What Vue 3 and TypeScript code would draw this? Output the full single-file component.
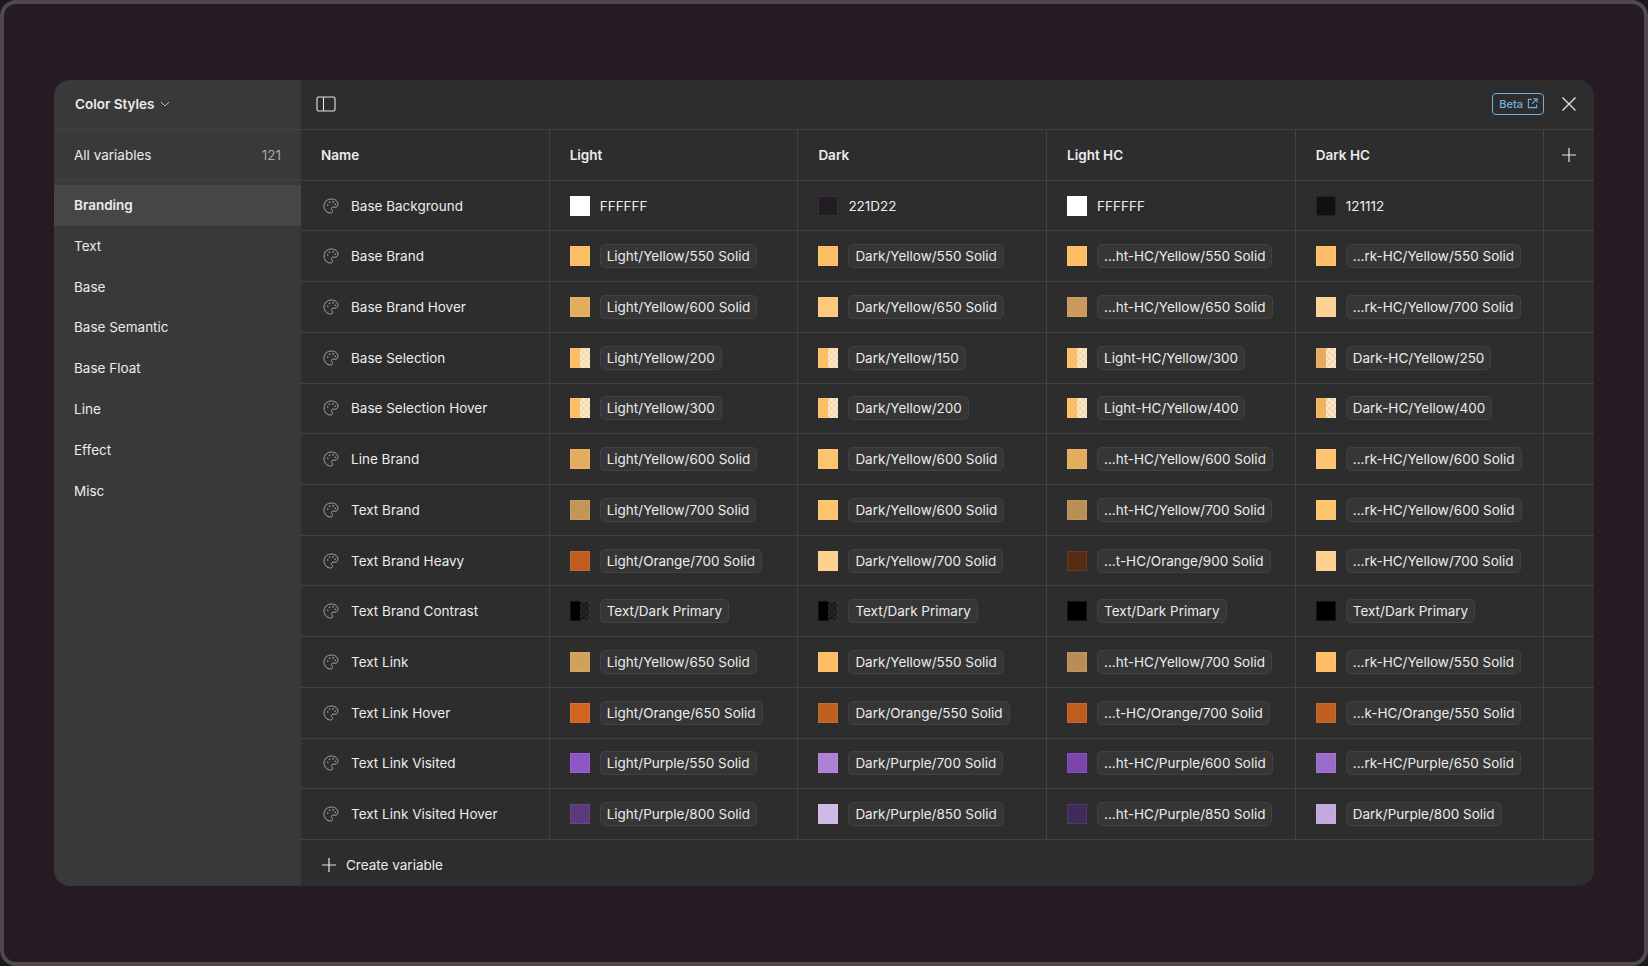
<script setup lang="ts">
interface Cell {
  color: string
  label: string
  raw?: boolean
  split?: '' | 'light' | 'dark'
}

interface Row {
  name: string
  cells: Cell[]
}

const c = (color: string, label: string, split: Cell['split'] = ''): Cell => ({ color, label, split })
const hex = (color: string, label: string): Cell => ({ color, label, raw: true })

const groups = ['Branding', 'Text', 'Base', 'Base Semantic', 'Base Float', 'Line', 'Effect', 'Misc']
const modes = ['Light', 'Dark', 'Light HC', 'Dark HC']

const rows: Row[] = [
  { name: 'Base Background', cells: [hex('#ffffff', 'FFFFFF'), hex('#221d22', '221D22'), hex('#ffffff', 'FFFFFF'), hex('#121112', '121112')] },
  { name: 'Base Brand', cells: [c('#fdbd66', 'Light/Yellow/550 Solid'), c('#fdbd66', 'Dark/Yellow/550 Solid'), c('#fdbd66', '...ht-HC/Yellow/550 Solid'), c('#fdbd66', '...rk-HC/Yellow/550 Solid')] },
  { name: 'Base Brand Hover', cells: [c('#e3ad5f', 'Light/Yellow/600 Solid'), c('#fdc97f', 'Dark/Yellow/650 Solid'), c('#c99a5b', '...ht-HC/Yellow/650 Solid'), c('#fdd192', '...rk-HC/Yellow/700 Solid')] },
  { name: 'Base Selection', cells: [c('#fdbd66', 'Light/Yellow/200', 'light'), c('#fdbd66', 'Dark/Yellow/150', 'light'), c('#fdbd66', 'Light-HC/Yellow/300', 'light'), c('#e8ab5e', 'Dark-HC/Yellow/250', 'light')] },
  { name: 'Base Selection Hover', cells: [c('#fdbd66', 'Light/Yellow/300', 'light'), c('#fdbd66', 'Dark/Yellow/200', 'light'), c('#fdbd66', 'Light-HC/Yellow/400', 'light'), c('#f0b361', 'Dark-HC/Yellow/400', 'light')] },
  { name: 'Line Brand', cells: [c('#e3ad5f', 'Light/Yellow/600 Solid'), c('#fdc46f', 'Dark/Yellow/600 Solid'), c('#e3ad5f', '...ht-HC/Yellow/600 Solid'), c('#fdc46f', '...rk-HC/Yellow/600 Solid')] },
  { name: 'Text Brand', cells: [c('#c49557', 'Light/Yellow/700 Solid'), c('#fdc46f', 'Dark/Yellow/600 Solid'), c('#ba8f55', '...ht-HC/Yellow/700 Solid'), c('#fdc46f', '...rk-HC/Yellow/600 Solid')] },
  { name: 'Text Brand Heavy', cells: [c('#bf5d1f', 'Light/Orange/700 Solid'), c('#fdd08f', 'Dark/Yellow/700 Solid'), c('#5a2d12', '...t-HC/Orange/900 Solid'), c('#fdd08f', '...rk-HC/Yellow/700 Solid')] },
  { name: 'Text Brand Contrast', cells: [c('#000000', 'Text/Dark Primary', 'dark'), c('#000000', 'Text/Dark Primary', 'dark'), c('#000000', 'Text/Dark Primary'), c('#000000', 'Text/Dark Primary')] },
  { name: 'Text Link', cells: [c('#d1a05d', 'Light/Yellow/650 Solid'), c('#fdbd66', 'Dark/Yellow/550 Solid'), c('#b98e55', '...ht-HC/Yellow/700 Solid'), c('#fdbd66', '...rk-HC/Yellow/550 Solid')] },
  { name: 'Text Link Hover', cells: [c('#d2651f', 'Light/Orange/650 Solid'), c('#bf6020', 'Dark/Orange/550 Solid'), c('#bf5d1f', '...t-HC/Orange/700 Solid'), c('#bf6020', '...k-HC/Orange/550 Solid')] },
  { name: 'Text Link Visited', cells: [c('#8f55c7', 'Light/Purple/550 Solid'), c('#ab82d4', 'Dark/Purple/700 Solid'), c('#7b45ad', '...ht-HC/Purple/600 Solid'), c('#9a6bcb', '...rk-HC/Purple/650 Solid')] },
  { name: 'Text Link Visited Hover', cells: [c('#5a3a7a', 'Light/Purple/800 Solid'), c('#d0b8e8', 'Dark/Purple/850 Solid'), c('#3f2a5c', '...ht-HC/Purple/850 Solid'), c('#c4a8e0', 'Dark/Purple/800 Solid')] },
]
</script>

<template>
  <div class="screen">
    <div class="panel">
      <aside class="side">
        <div class="collection">
          <span>Color Styles</span>
          <svg width="10" height="6" viewBox="0 0 10 6" fill="none" stroke="#b8b8b8"><path d="M1 1l4 4 4-4" /></svg>
        </div>
        <div class="all">
          <span>All variables</span>
          <span class="count">121</span>
        </div>
        <ul class="groups">
          <li v-for="(g, i) in groups" :key="g" :class="{ active: i === 0 }">{{ g }}</li>
        </ul>
      </aside>

      <main class="main">
        <div class="toolbar">
          <svg class="toggle" width="20" height="16" viewBox="0 0 20 16" fill="none" stroke="#e4e4e4" stroke-width="1.1">
            <rect x="1" y="1" width="18" height="14" rx="1.5" />
            <path d="M7.5 1v14" />
          </svg>
          <div class="tools">
            <span class="beta">
              Beta
              <svg width="11" height="11" viewBox="0 0 12 12" fill="none" stroke="#6fb1e0" stroke-width="1.2">
                <path d="M5 1.5H1.500v9h9V7" />
                <path d="M7 1h4v4M11 1L5.500 6.500" />
              </svg>
            </span>
            <svg width="14" height="14" viewBox="0 0 14 14" fill="none" stroke="#e8e8e8" stroke-width="1.2"><path d="M.5.5l13 13M13.500.5l-13 13" /></svg>
          </div>
        </div>

        <div class="row head">
          <div class="cell name-head">Name</div>
          <div v-for="m in modes" :key="m" class="cell">{{ m }}</div>
          <div class="cell add">
            <svg width="14" height="14" viewBox="0 0 14 14" fill="none" stroke="#e8e8e8" stroke-width="1.2"><path d="M7 0v14M0 7h14" /></svg>
          </div>
        </div>

        <div v-for="r in rows" :key="r.name" class="row">
          <div class="cell name">
            <svg class="palette" width="16" height="16" viewBox="0 0 16 16" fill="none" stroke="#a6a6a6" stroke-width="1">
              <path d="M8.200 1C4.200 1 1 4.100 1 8s3.100 7 6.600 7c1.300 0 1.900-.8 1.900-1.700 0-.6-.3-1-.6-1.400-.3-.4-.5-.8-.5-1.200 0-.9.7-1.500 1.600-1.500h1.800c1.900 0 3.200-1.200 3.200-3C15 3.200 11.900 1 8.200 1z" />
              <circle cx="4.700" cy="7" r=".8" fill="#a6a6a6" stroke="none" />
              <circle cx="6.500" cy="4.200" r=".8" fill="#a6a6a6" stroke="none" />
              <circle cx="10" cy="3.900" r=".8" fill="#a6a6a6" stroke="none" />
              <circle cx="12.300" cy="6.200" r=".8" fill="#a6a6a6" stroke="none" />
            </svg>
            <span>{{ r.name }}</span>
          </div>
          <div v-for="(v, i) in r.cells" :key="i" class="cell value">
            <span class="swatch" :class="v.split" :style="{ '--swatch': v.color }"></span>
            <span v-if="v.raw" class="raw">{{ v.label }}</span>
            <span v-else class="chip">{{ v.label }}</span>
          </div>
          <div class="cell add"></div>
        </div>

        <div class="create">
          <svg width="14" height="14" viewBox="0 0 14 14" fill="none" stroke="#e8e8e8" stroke-width="1.2"><path d="M7 0v14M0 7h14" /></svg>
          <span>Create variable</span>
        </div>
      </main>
    </div>
  </div>
</template>

<style>
html, body {
  margin: 0;
  background: #1a181a;
}
</style>

<style scoped>
.screen {
  width: 1648px;
  height: 966px;
  box-sizing: border-box;
  border: 4px solid #4f4850;
  border-radius: 16px;
  background: #261b24;
  display: flex;
  align-items: center;
  justify-content: center;
  font-family: Inter, "Liberation Sans", sans-serif;
  font-size: 13.5px;
  color: #ececec;
}
.panel {
  width: 1540px;
  height: 806px;
  display: flex;
  border-radius: 16px;
  overflow: hidden;
  background: #2d2d2d;
}
.side {
  width: 247px;
  flex: none;
  background: #393939;
}
.collection {
  height: 49px;
  box-sizing: border-box;
  display: flex;
  align-items: center;
  gap: 6px;
  padding: 0 0 2px 21px;
  font-weight: 600;
  border-bottom: 1px solid #434343;
  height: 50px;
}
.all {
  height: 50px;
  box-sizing: border-box;
  display: flex;
  align-items: center;
  justify-content: space-between;
  padding: 0 20px;
  border-bottom: 1px solid #434343;
}
.count {
  color: #a8a8a8;
}
.groups {
  list-style: none;
  margin: 5px 0 0;
  padding: 0;
}
.groups li {
  height: 40.8px;
  line-height: 40.8px;
  padding-left: 20px;
}
.groups li.active {
  background: #464646;
  font-weight: 600;
}
.main {
  flex: 1;
  min-width: 0;
}
.toolbar {
  height: 50px;
  box-sizing: border-box;
  display: flex;
  align-items: center;
  justify-content: space-between;
  padding: 0 18px 2px 15px;
  border-bottom: 1px solid #414141;
}
.toggle {
  display: block;
}
.tools {
  display: flex;
  align-items: center;
  gap: 18px;
}
.beta {
  height: 22px;
  box-sizing: border-box;
  display: flex;
  align-items: center;
  gap: 4px;
  padding: 0 5px 0 6px;
  border: 1px solid #6fb1e0;
  border-radius: 4px;
  font-size: 11px;
  font-weight: 500;
  color: #6fb1e0;
}
.row {
  display: grid;
  grid-template-columns: repeat(5, 248.7px) 1fr;
  height: 50.72px;
  box-sizing: border-box;
  border-bottom: 1px solid #414141;
}
.head {
  font-weight: 600;
}
.cell {
  display: flex;
  align-items: center;
  padding-left: 20px;
  border-right: 1px solid #414141;
  white-space: nowrap;
  min-width: 0;
}
.name {
  padding-left: 22px;
  gap: 12px;
}
.name-head {
  padding-left: 20px;
}
.add {
  border-right: none;
  padding-left: 0;
  justify-content: center;
}
.value {
  gap: 10px;
}
.palette {
  flex: none;
}
.swatch {
  width: 20px;
  height: 20px;
  flex: none;
  background: var(--swatch);
  box-shadow: inset 0 0 0 1px rgba(255, 255, 255, 0.08);
}
.swatch.light {
  background:
    linear-gradient(90deg, var(--swatch) 50%, transparent 50%),
    conic-gradient(#f4d8ab 25%, #fae8cc 0 50%, #f4d8ab 0 75%, #fae8cc 0) 0 0 / 6px 6px;
}
.swatch.dark {
  background:
    linear-gradient(90deg, var(--swatch) 50%, transparent 50%),
    conic-gradient(#1b1b1b 25%, #262626 0 50%, #1b1b1b 0 75%, #262626 0) 0 0 / 6px 6px;
}
.raw {
  color: #ececec;
}
.chip {
  height: 24px;
  box-sizing: border-box;
  display: flex;
  align-items: center;
  padding: 0 6px;
  border: 1px solid #414141;
  border-radius: 5px;
  background: #363636;
}
.create {
  height: 47px;
  box-sizing: border-box;
  display: flex;
  align-items: center;
  gap: 10px;
  padding: 3px 0 0 21px;
}
</style>
